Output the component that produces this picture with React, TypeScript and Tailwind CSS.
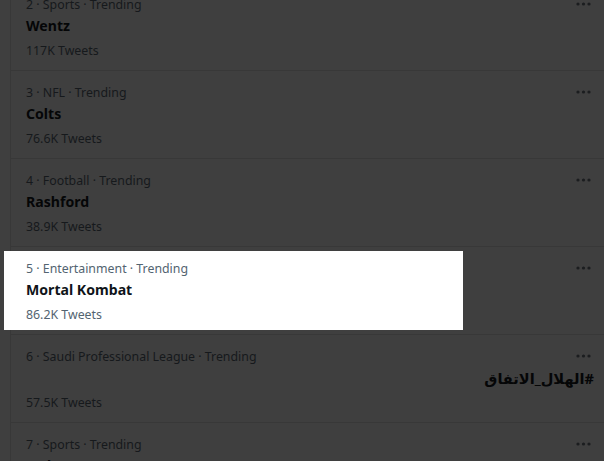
import React from 'react';

type Trend = {
  rank: number;
  category: string;
  title: string;
  tweets: string;
  rtl?: boolean;
  highlight?: boolean;
};

const TRENDS: Trend[] = [
  { rank: 2, category: 'Sports', title: 'Wentz', tweets: '117K Tweets' },
  { rank: 3, category: 'NFL', title: 'Colts', tweets: '76.6K Tweets' },
  { rank: 4, category: 'Football', title: 'Rashford', tweets: '38.9K Tweets' },
  { rank: 5, category: 'Entertainment', title: 'Mortal Kombat', tweets: '86.2K Tweets', highlight: true },
  { rank: 6, category: 'Saudi Professional League', title: '#الهلال_الاتفاق', tweets: '57.5K Tweets', rtl: true },
  { rank: 7, category: 'Sports', title: 'Fedora', tweets: '12K Tweets' },
];

function Dots() {
  return (
    <svg width="16" height="4" viewBox="0 0 16 4" className="fill-[#1b1d1f]">
      <circle cx="2" cy="2" r="1.6" />
      <circle cx="7.5" cy="2" r="1.6" />
      <circle cx="13" cy="2" r="1.6" />
    </svg>
  );
}

function TrendRow({ trend }: { trend: Trend }) {
  const hl = trend.highlight;
  const meta = hl ? 'text-[#536471]' : 'text-[#16191c]';
  const title = hl ? 'text-[#0f1419]' : 'text-[#050607]';

  return (
    <div className="relative h-[88px] border-b border-[#383838] pl-[15px] pr-[10px] pt-[13px]">
      {/* More button */}
      <div className="absolute right-[12px] top-[19px]">
        <Dots />
      </div>

      <div
        className={
          hl
            ? '-ml-[22px] -mt-[9px] w-[459px] bg-white pl-[22px] pt-[9px] pb-[6px]'
            : ''
        }
      >
        <div className={`h-[18px] text-[12.35px] leading-[18px] ${meta}`}>
          {trend.rank} · {trend.category} · Trending
        </div>
        <div
          dir={trend.rtl ? 'rtl' : 'ltr'}
          className={`h-[24px] font-bold leading-[24px] ${trend.rtl ? 'text-[14.6px]' : 'text-[14.1px]'} ${title}`}
        >
          {trend.title}
        </div>
        <div className={`mt-1 h-[18px] text-[12.35px] leading-[18px] ${meta}`}>
          {trend.tweets}
        </div>
      </div>
    </div>
  );
}

export default function App() {
  return (
    <div
      className="h-[461px] w-[604px] overflow-hidden bg-[#3f3f3f]"
      style={{ fontFamily: '"Segoe UI", "Noto Sans", "DejaVu Sans", sans-serif' }}
    >
      <div className="ml-[10px] -mt-[17px] border-l border-[#383838]">
        {TRENDS.map((t) => (
          <TrendRow key={t.rank} trend={t} />
        ))}
      </div>
    </div>
  );
}
